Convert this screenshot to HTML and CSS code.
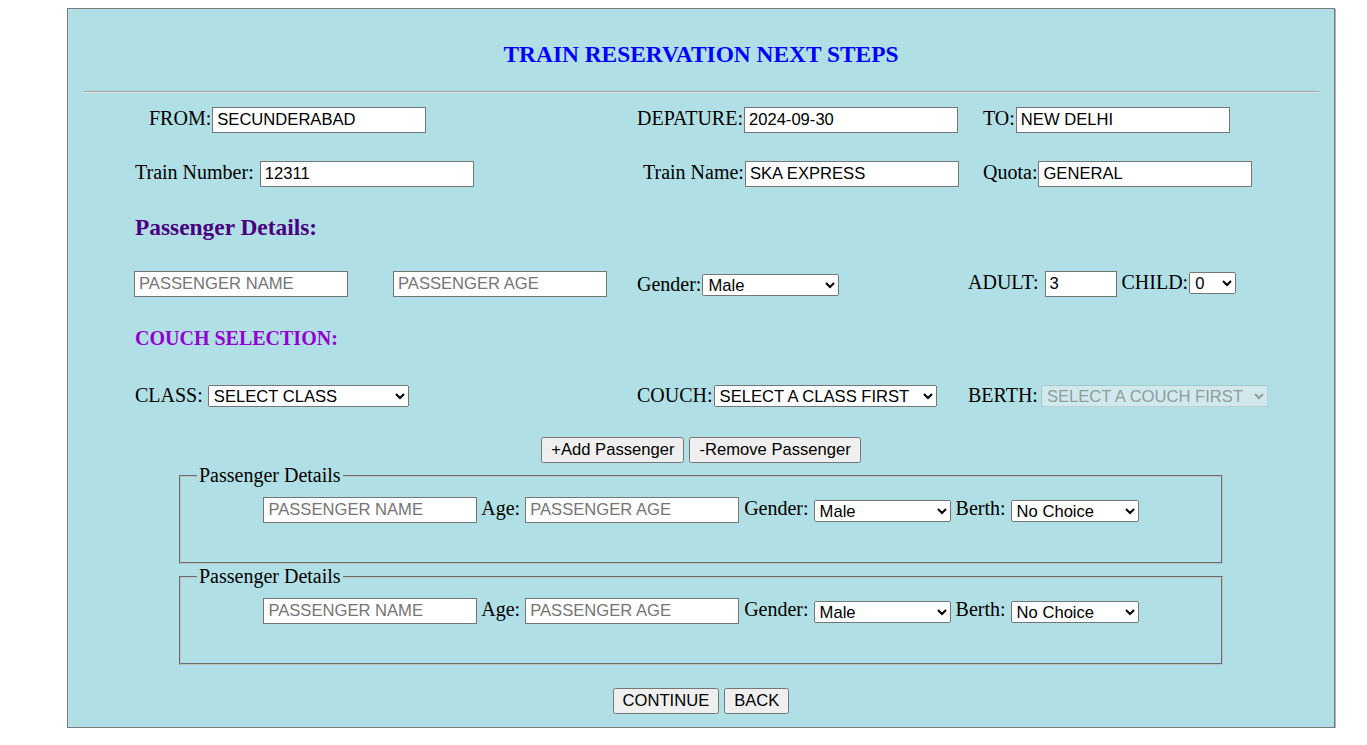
FILE: index.html
```html
<!DOCTYPE html>
<html>
<head>
<meta charset="utf-8">
<title>Train Reservation Next Steps</title>
<link rel="stylesheet" href="styles.css">
</head>
<body>
<div class="page">
  <h3 class="title">TRAIN RESERVATION NEXT STEPS</h3>
  <hr class="rule">

  <div class="row row1">
    <div class="cell off14">FROM:<input class="txt" type="text" value="SECUNDERABAD"></div>
    <div class="cell">DEPATURE:<input class="txt" type="text" value="2024-09-30"></div>
    <div class="cell off15">TO:<input class="txt" type="text" value="NEW DELHI"></div>
  </div>

  <div class="row row2">
    <div class="cell">Train Number: <input class="txt" type="text" value="12311"></div>
    <div class="cell off6">Train Name:<input class="txt" type="text" value="SKA EXPRESS"></div>
    <div class="cell off15">Quota:<input class="txt" type="text" value="GENERAL"></div>
  </div>

  <h3 class="sub">Passenger Details:</h3>

  <div class="row row4">
    <div class="cell"><input class="txt first" type="text" placeholder="PASSENGER NAME"><input class="txt age" type="text" placeholder="PASSENGER AGE"></div>
    <div class="cell">Gender:<select class="sel w137"><option>Male</option><option>Female</option></select></div>
    <div class="cell">ADULT: <input class="txt num" type="text" value="3"> CHILD:<select class="sel w47"><option>0</option><option>1</option></select></div>
  </div>

  <h4 class="couch">COUCH SELECTION:</h4>

  <div class="row row6">
    <div class="cell">CLASS: <select class="sel w201"><option>SELECT CLASS</option></select></div>
    <div class="cell">COUCH:<select class="sel w223"><option>SELECT A CLASS FIRST</option></select></div>
    <div class="cell">BERTH:<select class="sel w227 dis" disabled><option>SELECT A COUCH FIRST</option></select></div>
  </div>

  <div class="btns add">
    <button class="btn" type="button">+Add Passenger</button> <button class="btn" type="button">-Remove Passenger</button>
  </div>

  <fieldset class="pax">
    <legend>Passenger Details</legend>
    <div class="paxrow">
      <input class="txt" type="text" placeholder="PASSENGER NAME"> Age: <input class="txt" type="text" placeholder="PASSENGER AGE"> Gender: <select class="sel w137"><option>Male</option><option>Female</option></select> Berth: <select class="sel w128"><option>No Choice</option></select>
    </div>
  </fieldset>

  <fieldset class="pax">
    <legend>Passenger Details</legend>
    <div class="paxrow">
      <input class="txt" type="text" placeholder="PASSENGER NAME"> Age: <input class="txt" type="text" placeholder="PASSENGER AGE"> Gender: <select class="sel w137"><option>Male</option><option>Female</option></select> Berth: <select class="sel w128"><option>No Choice</option></select>
    </div>
  </fieldset>

  <div class="btns bottom">
    <button class="btn" type="button">CONTINUE</button> <button class="btn" type="button">BACK</button>
  </div>
</div>
</body>
</html>
```

FILE: styles.css
```css
html, body {
  background: #ffffff;
}
body {
  margin: 8px;
  font-family: "Liberation Serif", "Times New Roman", serif;
  font-size: 20px;
  color: #000;
}
.page {
  box-sizing: border-box;
  width: 1268px;
  margin-left: 59px;
  border: 1px solid #7a7a7a;
  box-shadow: 1px 1px 0 #b4b4b4;
  background: #b0e0e6;
  padding-bottom: 13px;
}
.title {
  margin: 31px 0 0;
  height: 28px;
  line-height: 28px;
  font-size: 23.4px;
  font-weight: bold;
  color: #0000ff;
  text-align: center;
}
.rule {
  margin: 23px 15px 0 16px;
  height: 0;
  border: 0;
  border-top: 1px solid #a3a3a3;
  border-bottom: 1px solid #e6e6e6;
}
.row {
  display: grid;
  grid-template-columns: 502px 331px auto;
  align-items: center;
  height: 26px;
  padding-left: 67px;
  white-space: nowrap;
}
.row1 { margin-top: 14px; }
.row2 { margin-top: 28px; }
.row4 { margin-top: 30px; }
.row6 { margin-top: 32px; }
.cell {
  line-height: 23px;
  white-space: nowrap;
}
.off14 { padding-left: 14px; }
.off15 { padding-left: 15px; }
.off6 { padding-left: 6px; }

.sub {
  margin: 27px 0 0;
  padding-left: 67px;
  height: 27px;
  line-height: 27px;
  font-size: 23.4px;
  font-weight: bold;
  color: #4b0082;
}
.couch {
  margin: 30px 0 0;
  padding-left: 67px;
  height: 23px;
  line-height: 23px;
  font-size: 20px;
  font-weight: bold;
  color: #9400d3;
}

.txt {
  box-sizing: border-box;
  width: 214px;
  height: 26px;
  margin: 0 0 0 1px;
  padding: 1px 4px;
  border: 1px solid #767676;
  border-radius: 0;
  background: #ffffff;
  font-family: "Liberation Sans", Arial, sans-serif;
  font-size: 16.6px;
  color: #000;
  vertical-align: baseline;
}
.txt::placeholder {
  color: #757575;
}
.first { margin-left: -1px; }
.age { margin-left: 45px; }
.num { width: 72px; }
.paxrow .txt { margin-left: 0; }

.sel {
  box-sizing: border-box;
  height: 22px;
  margin: 0 0 0 1px;
  padding-left: 1px;
  font-family: "Liberation Sans", Arial, sans-serif;
  font-size: 16.6px;
  vertical-align: baseline;
}
.w47 { width: 47px; }
.w128 { width: 128px; }
.w137 { width: 137px; }
.w201 { width: 201px; margin-left: 0; }
.w223 { width: 223px; }
.w227 { width: 227px; margin-left: 3px; }
.paxrow .sel {
  margin-left: 0;
  vertical-align: -2px;
}

.btns {
  text-align: center;
  height: 26px;
}
.add { margin-top: 29px; }
.bottom { margin-top: 23px; }
.btn {
  box-sizing: border-box;
  height: 26px;
  margin: 0;
  padding: 1px 8px;
  font-family: "Liberation Sans", Arial, sans-serif;
  font-size: 16.6px;
  color: #000;
  vertical-align: top;
}

.pax {
  box-sizing: border-box;
  width: 1044px;
  margin: 1px auto 0;
  padding: 8px 12px 41px;
  border: 2px groove #c0c0c0;
  font-size: 20px;
}
.pax legend {
  padding: 0 2px;
  margin-left: 4px;
  line-height: 23px;
}
.paxrow {
  text-align: center;
  height: 26px;
  line-height: 26px;
  white-space: nowrap;
}
```
